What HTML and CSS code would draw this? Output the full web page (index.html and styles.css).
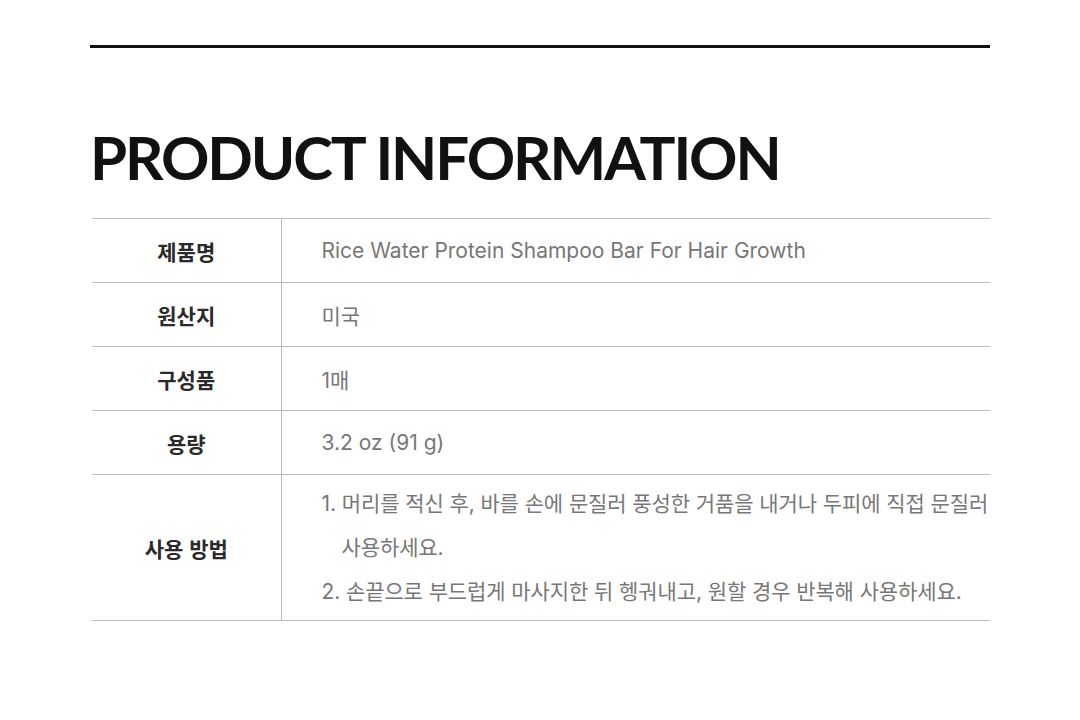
FILE: index.html
```html
<!DOCTYPE html>
<html lang="ko">
<head>
<meta charset="utf-8">
<link rel="stylesheet" href="styles.css">
</head>
<body>
<div class="page">
  <hr class="rule">
  <h1 class="title">PRODUCT INFORMATION</h1>
  <table class="info">
    <colgroup>
      <col class="col-label">
      <col class="col-value">
    </colgroup>
    <tr>
      <th>제품명</th>
      <td>Rice Water Protein Shampoo Bar For Hair Growth</td>
    </tr>
    <tr>
      <th>원산지</th>
      <td>미국</td>
    </tr>
    <tr>
      <th>구성품</th>
      <td>1매</td>
    </tr>
    <tr>
      <th>용량</th>
      <td>3.2 oz (91 g)</td>
    </tr>
    <tr class="usage">
      <th>사용 방법</th>
      <td>
        <div class="steps">
          <p class="step">1. 머리를 적신 후, 바를 손에 문질러 풍성한 거품을 내거나 두피에 직접 문질러<br>사용하세요.</p>
          <p class="step">2. 손끝으로 부드럽게 마사지한 뒤 헹궈내고, 원할 경우 반복해 사용하세요.</p>
        </div>
      </td>
    </tr>
  </table>
</div>
</body>
</html>
```

FILE: styles.css
```css
html, body {
  margin: 0;
  padding: 0;
  background: #fff;
}
.page {
  width: 900px;
  margin: 0 auto;
  padding-top: 45px;
  font-family: "Inter", "Noto Sans CJK KR", sans-serif;
}
.rule {
  margin: 0;
  border: 0;
  height: 3px;
  background: #111;
}
.title {
  margin: 73px 0 0 0;
  font-family: "Lato", sans-serif;
  font-weight: 700;
  font-size: 60px;
  line-height: 72px;
  color: #111;
  letter-spacing: -2.1px;
}
.info {
  margin: 25px 0 0 2px;
  width: 898px;
  table-layout: fixed;
  border-collapse: collapse;
  border-top: 1px solid #bbb;
}
.col-label {
  width: 189px;
}
.info tr {
  border-bottom: 1px solid #bbb;
}
.info th {
  height: 63px;
  padding: 0;
  font-family: "Noto Sans CJK KR", sans-serif;
  font-weight: 700;
  font-size: 21px;
  color: #2a2a2a;
  text-align: center;
  border-right: 1px solid #bbb;
}
.info td {
  padding: 0 0 0 40px;
  font-size: 21px;
  color: #777;
  text-align: left;
}
.usage th, .usage td {
  height: 145px;
}
.steps {
  line-height: 44px;
}
.step {
  margin: 0;
  padding-left: 20px;
  text-indent: -20px;
  white-space: nowrap;
  letter-spacing: -0.1px;
}
```
